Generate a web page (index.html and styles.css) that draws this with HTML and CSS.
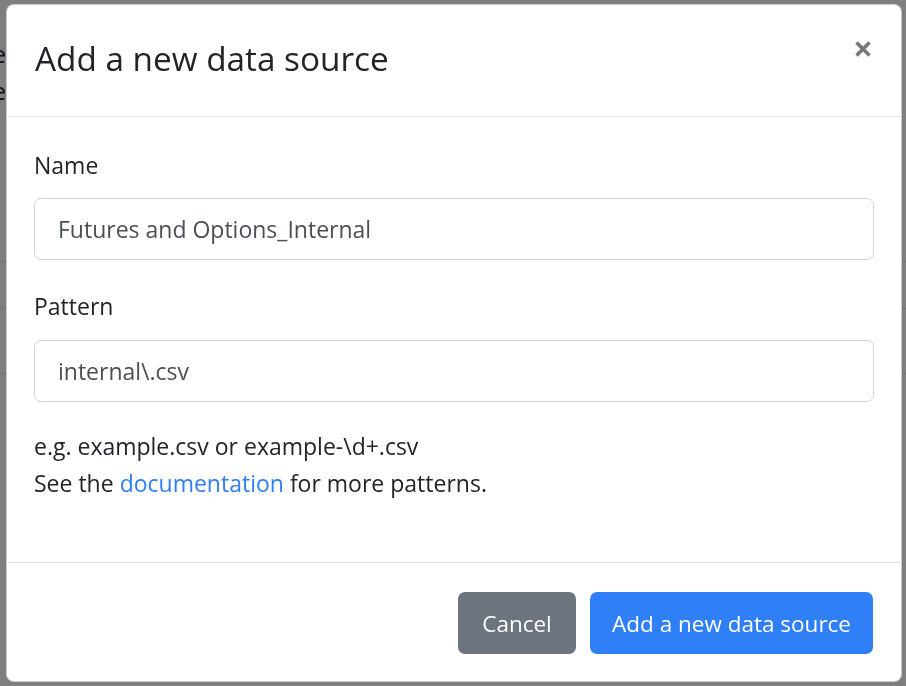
FILE: index.html
```html
<!DOCTYPE html>
<html lang="en">
<head>
<meta charset="utf-8">
<title>Add a new data source</title>
<link rel="stylesheet" href="styles.css">
</head>
<body>
<div class="page">
  <div class="intro">
    <span>Data sources define which files we use</span>
    <span>and import into the pipeline</span>
  </div>
  <div class="table">
    <div class="row row-a"></div>
    <div class="row row-b"></div>
    <div class="row row-c"></div>
  </div>
</div>
<div class="backdrop"></div>
<div class="modal" role="dialog">
  <div class="modal-header">
    <h4 class="modal-title">Add a new data source</h4>
    <button class="close" type="button" aria-label="Close">
      <svg width="16" height="16" viewBox="0 0 16 16"><path d="M1.5 1.5 L14.5 14.5 M14.5 1.5 L1.5 14.5" stroke="#777" stroke-width="3.6" fill="none"/></svg>
    </button>
  </div>
  <div class="modal-body">
    <div class="form-group">
      <label for="name">Name</label>
      <input id="name" class="form-control" type="text" value="Futures and Options_Internal">
    </div>
    <div class="form-group form-group-last">
      <label for="pattern">Pattern</label>
      <input id="pattern" class="form-control" type="text" value="internal\.csv">
    </div>
    <p class="help">e.g. example.csv or example-\d+.csv<br>See the <a href="#">documentation</a> for more patterns.</p>
  </div>
  <div class="modal-footer">
    <button class="btn btn-secondary" type="button">Cancel</button>
    <button class="btn btn-primary" type="button">Add a new data source</button>
  </div>
</div>
</body>
</html>
```

FILE: styles.css
```css
* { box-sizing: border-box; }
html, body { margin: 0; height: 100%; }
body {
  font-family: "Open Sans", "Noto Sans", sans-serif;
  color: #212529;
  background: #fff;
  overflow: hidden;
}
.page { padding-top: 35px; }
.intro {
  width: 6px;
  display: flex;
  flex-direction: column;
  align-items: flex-end;
  font-size: 24px;
  line-height: 37px;
  white-space: nowrap;
}
.table { margin-top: 95px; }
.row { border-bottom: 1px solid #dee2e6; }
.row-a { height: 58px; }
.row-b { height: 47px; }
.row-c { height: 65px; }

.backdrop {
  position: fixed;
  inset: 0;
  background: rgba(0, 0, 0, 0.5);
}
.modal {
  position: fixed;
  left: 6px;
  top: 4px;
  width: 896px;
  height: 678px;
  background: #fff;
  border: 1px solid rgba(0, 0, 0, 0.2);
  border-radius: 8px;
  display: flex;
  flex-direction: column;
}
.modal-header {
  display: flex;
  justify-content: space-between;
  align-items: flex-start;
  padding: 33px 30px 37px 28px;
  border-bottom: 1px solid #dee2e6;
}
.modal-title {
  margin: 0;
  font-size: 33.3px;
  line-height: 40.8px;
  font-weight: 400;
}
.close {
  margin-top: 3px;
  padding: 0;
  border: 0;
  background: none;
  width: 16px;
  height: 16px;
  display: flex;
}
.modal-body {
  flex: 1;
  padding: 30px 27px 0;
}
.form-group { margin-bottom: 28px; }
.form-group-last { margin-bottom: 26px; }
label {
  display: block;
  font-size: 23px;
  line-height: 37.5px;
  margin-bottom: 14px;
}
.form-control {
  display: block;
  width: 100%;
  height: 62px;
  padding: 0 23px;
  font-family: inherit;
  font-size: 23px;
  color: #495057;
  border: 1px solid #ced4da;
  border-radius: 7px;
  background: #fff;
}
.help {
  margin: 0;
  font-size: 23px;
  line-height: 37.5px;
}
.help a { color: #2f7ff6; text-decoration: none; }
.modal-footer {
  display: flex;
  justify-content: flex-end;
  gap: 14px;
  padding: 29px 28px 27px;
  border-top: 1px solid #dee2e6;
}
.btn {
  height: 62px;
  padding: 0 22px;
  font-family: inherit;
  font-size: 22.5px;
  color: #fff;
  border: 0;
  border-radius: 7px;
}
.btn-secondary { background: #6c757d; min-width: 118px; }
.btn-primary { background: #2f7ff6; }
```
